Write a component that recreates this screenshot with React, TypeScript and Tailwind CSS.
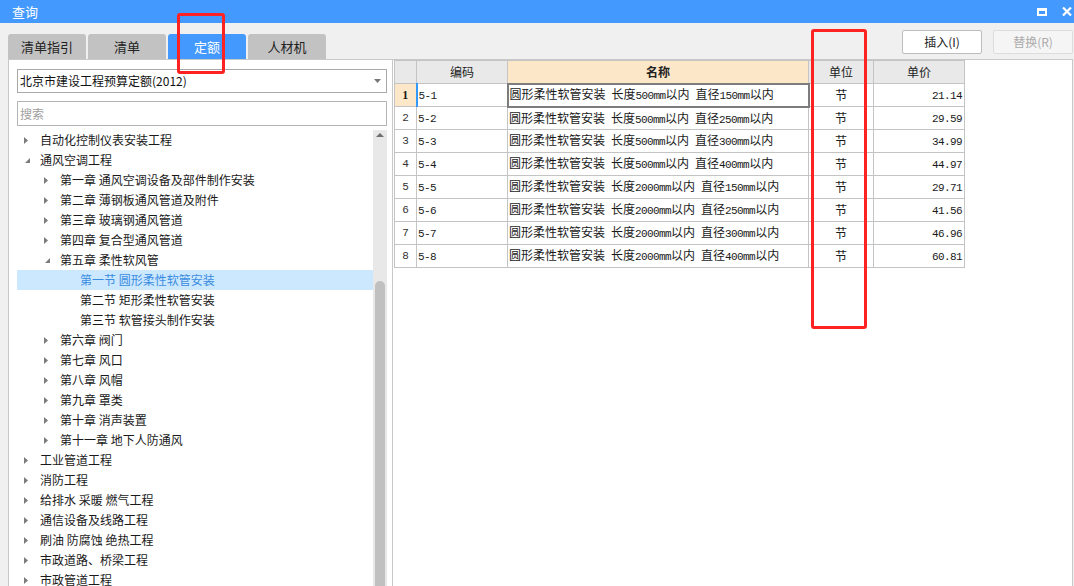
import { ReactNode } from 'react'

type TreeRow = { text: string; level: number; state: 'closed' | 'open' | 'leaf'; selected?: boolean }

const tree: TreeRow[] = [
  { text: '自动化控制仪表安装工程', level: 0, state: 'closed' },
  { text: '通风空调工程', level: 0, state: 'open' },
  { text: '第一章 通风空调设备及部件制作安装', level: 1, state: 'closed' },
  { text: '第二章 薄钢板通风管道及附件', level: 1, state: 'closed' },
  { text: '第三章 玻璃钢通风管道', level: 1, state: 'closed' },
  { text: '第四章 复合型通风管道', level: 1, state: 'closed' },
  { text: '第五章 柔性软风管', level: 1, state: 'open' },
  { text: '第一节 圆形柔性软管安装', level: 2, state: 'leaf', selected: true },
  { text: '第二节 矩形柔性软管安装', level: 2, state: 'leaf' },
  { text: '第三节 软管接头制作安装', level: 2, state: 'leaf' },
  { text: '第六章 阀门', level: 1, state: 'closed' },
  { text: '第七章 风口', level: 1, state: 'closed' },
  { text: '第八章 风帽', level: 1, state: 'closed' },
  { text: '第九章 罩类', level: 1, state: 'closed' },
  { text: '第十章 消声装置', level: 1, state: 'closed' },
  { text: '第十一章 地下人防通风', level: 1, state: 'closed' },
  { text: '工业管道工程', level: 0, state: 'closed' },
  { text: '消防工程', level: 0, state: 'closed' },
  { text: '给排水 采暖 燃气工程', level: 0, state: 'closed' },
  { text: '通信设备及线路工程', level: 0, state: 'closed' },
  { text: '刷油 防腐蚀 绝热工程', level: 0, state: 'closed' },
  { text: '市政道路、桥梁工程', level: 0, state: 'closed' },
  { text: '市政管道工程', level: 0, state: 'closed' },
]

const rows = [
  { code: '5-1', len: '500', dia: '150', price: '21.14' },
  { code: '5-2', len: '500', dia: '250', price: '29.59' },
  { code: '5-3', len: '500', dia: '300', price: '34.99' },
  { code: '5-4', len: '500', dia: '400', price: '44.97' },
  { code: '5-5', len: '2000', dia: '150', price: '29.71' },
  { code: '5-6', len: '2000', dia: '250', price: '41.56' },
  { code: '5-7', len: '2000', dia: '300', price: '46.96' },
  { code: '5-8', len: '2000', dia: '400', price: '60.81' },
]

const tabs = ['清单指引', '清单', '定额', '人材机']

// ascii runs get a narrow mono font so they look half-width like the original grid font
function Mixed({ text }: { text: string }) {
  const parts = text.split(/([\x20-\x7e]+)/).filter(Boolean)
  return (
    <>
      {parts.map((p, i) =>
        /^[\x20-\x7e]+$/.test(p) ? (
          <span key={i} className="font-['Liberation_Mono',monospace] text-[11px] tracking-[-0.6px] whitespace-pre">
            {p}
          </span>
        ) : (
          <span key={i}>{p}</span>
        )
      )}
    </>
  )
}

function Arrow({ state }: { state: TreeRow['state'] }) {
  if (state === 'leaf') return null
  if (state === 'open')
    return (
      <svg width="7" height="6" viewBox="0 0 7 6" className="ml-[2px] mt-[2px]">
        <polygon points="6,0 6,5 1,5" fill="#7c7c7c" />
      </svg>
    )
  return (
    <svg width="5" height="7" viewBox="0 0 5 7" className="ml-[2px]">
      <polygon points="0,0 4,3.5 0,7" fill="#7c7c7c" />
    </svg>
  )
}

function HeadCell({ children, bold, peach }: { children?: ReactNode; bold?: boolean; peach?: boolean }) {
  return (
    <th
      className={`h-[23px] border border-[#c4c4c4] text-center text-[12px] text-[#222] ${
        peach ? 'bg-[#fde7c9]' : 'bg-[#e9e9e9]'
      } ${bold ? 'font-bold' : 'font-normal'}`}
    >
      {children}
    </th>
  )
}

export default function App() {
  return (
    <div className="relative w-[1074px] h-[586px] overflow-hidden bg-[#f0f0f0] font-['Noto_Sans_CJK_SC',sans-serif] text-[#1a1a1a]">
      {/* title bar */}
      <div className="h-[23px] bg-[#4499ff] flex items-center justify-between pl-[12px] pr-[2px]">
        <span className="text-white text-[13px] leading-none">查询</span>
        <div className="flex items-center gap-[15px]">
          <div className="w-[10px] h-[8px] border-2 border-white border-t-[3px]" />
          <svg width="10" height="9" viewBox="0 0 10 9">
            <path d="M1 0.5 L9 8.5 M9 0.5 L1 8.5" stroke="white" strokeWidth="2.2" />
          </svg>
        </div>
      </div>

      <div className="flex h-[563px]">
        {/* left column */}
        <div className="w-[392px] pl-[8px] flex flex-col">
          <div className="mt-[11px] h-[25px] shrink-0 flex gap-[2px]">
            {tabs.map(t => (
              <div
                key={t}
                className={`w-[78px] rounded-t-[3px] flex items-center justify-center text-[13px] ${
                  t === '定额' ? 'bg-[#4499ff] text-white' : 'bg-[#c2c2c2] text-[#222]'
                }`}
              >
                {t}
              </div>
            ))}
          </div>
          <div className="flex-1 min-h-0 overflow-hidden bg-white border-l border-t border-[#c8c8c8] pl-[8px] flex flex-col">
            <div className="mt-[9px] shrink-0 w-[370px] h-[24px] border border-[#a9a9a9] flex items-center justify-between pl-[2px] pr-[5px]">
              <span className="text-[12px] text-[#111]">北京市建设工程预算定额(2012)</span>
              <svg width="7" height="4" viewBox="0 0 7 4">
                <polygon points="0,0 7,0 3.5,4" fill="#777" />
              </svg>
            </div>
            <div className="mt-[8px] shrink-0 w-[370px] h-[25px] border border-[#b5b5b5] flex items-center pl-[2px]">
              <span className="text-[12px] text-[#a0a0a0]">搜索</span>
            </div>
            <div className="mt-[4px] flex flex-1 min-h-0">
              <div className="w-[356px]">
                {tree.map(r => (
                  <div
                    key={r.text}
                    className={`h-[20px] flex items-center text-[12px] ${
                      r.selected ? 'bg-[#cce8ff] text-[#3a8ce0]' : ''
                    } ${r.level === 0 ? 'pl-[5px]' : r.level === 1 ? 'pl-[25px]' : 'pl-[45px]'}`}
                  >
                    <div className="w-[18px] flex items-center">
                      <Arrow state={r.state} />
                    </div>
                    <span className="whitespace-pre">{r.text}</span>
                  </div>
                ))}
              </div>
              {/* scrollbar */}
              <div className="w-[14px] bg-[#e8e8e8] flex flex-col items-center">
                <svg width="8" height="4" viewBox="0 0 8 4" className="mt-[3px] shrink-0">
                  <polygon points="0,4 8,4 4,0" fill="#6f6f6f" />
                </svg>
                <div className="mt-auto shrink-0 w-[10px] h-[305px] bg-[#c0c0c0] rounded-t-full" />
              </div>
            </div>
          </div>
        </div>

        {/* right column */}
        <div className="flex-1 flex flex-col">
          <div className="mt-[7px] h-[24px] shrink-0 flex justify-end gap-[11px] pr-[1px]">
            <button className="w-[80px] h-[24px] bg-white border border-[#bdbdbd] rounded-[2px] text-[12px] text-[#222]">
              插入(I)
            </button>
            <button className="w-[80px] h-[24px] bg-[#f5f5f5] border border-[#dddddd] rounded-[2px] text-[12px] text-[#ababab]">
              替换(R)
            </button>
          </div>
          <div className="mt-[5px] flex-1 min-h-0 bg-white border-l border-t border-r border-[#c8c8c8] pl-[1px] mr-[1px]">
            <table className="border-collapse table-fixed w-[570px]">
              <colgroup>
                <col className="w-[22px]" />
                <col className="w-[91px]" />
                <col className="w-[301px]" />
                <col className="w-[65px]" />
                <col className="w-[91px]" />
              </colgroup>
              <thead>
                <tr>
                  <HeadCell />
                  <HeadCell>编码</HeadCell>
                  <HeadCell bold peach>
                    名称
                  </HeadCell>
                  <HeadCell>单位</HeadCell>
                  <HeadCell>单价</HeadCell>
                </tr>
              </thead>
              <tbody>
                {rows.map((r, i) => {
                  const first = i === 0
                  return (
                    <tr key={r.code} className="h-[23px]">
                      <td
                        className={`border border-[#c4c4c4] text-center ${
                          first
                            ? "bg-[#fde7c9] font-['Liberation_Serif',serif] font-bold text-[12px]"
                            : "font-['Liberation_Mono',monospace] text-[11px] text-[#333]"
                        }`}
                      >
                        {i + 1}
                      </td>
                      <td
                        className={`border border-[#c4c4c4] pl-[1px] text-[12px] ${
                          first ? 'border-l-2 border-l-[#3399ff]' : ''
                        }`}
                      >
                        <Mixed text={r.code} />
                      </td>
                      <td
                        className={`text-[12px] pl-[1px] whitespace-nowrap ${
                          first ? 'border-2 border-[#7d7d7d]' : 'border border-[#c4c4c4]'
                        }`}
                      >
                        <Mixed text={`圆形柔性软管安装 长度${r.len}mm以内 直径${r.dia}mm以内`} />
                      </td>
                      <td className="border border-[#c4c4c4] text-center text-[12px]">节</td>
                      <td className="border border-[#c4c4c4] text-right pr-[2px] text-[12px]">
                        <Mixed text={r.price} />
                      </td>
                    </tr>
                  )
                })}
              </tbody>
            </table>
          </div>
        </div>
      </div>

      {/* red annotation boxes */}
      <div className="absolute left-[177px] top-[13px] w-[48px] h-[61px] border-[3px] border-[#ff2222] rounded-[3px]" />
      <div className="absolute left-[811px] top-[29px] w-[56px] h-[300px] border-[3px] border-[#ff2222] rounded-[3px]" />
    </div>
  )
}
